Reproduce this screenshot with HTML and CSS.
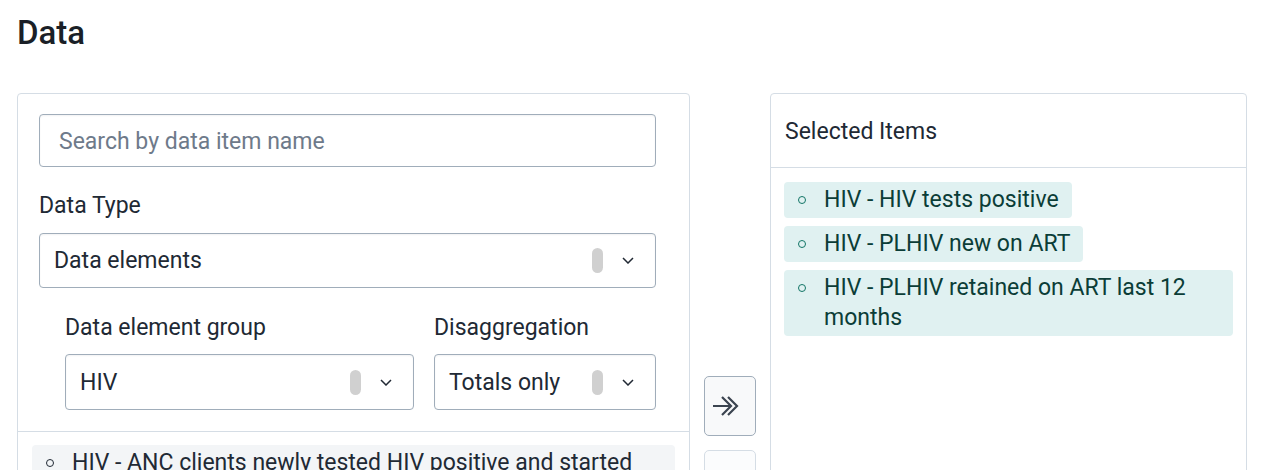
FILE: index.html
```html
<!DOCTYPE html>
<html lang="en">
<head>
<meta charset="utf-8">
<title>Data</title>
<link rel="stylesheet" href="styles.css">
</head>
<body>
<div class="page">
  <h1 class="title">Data</h1>
  <div class="transfer">
    <section class="panel source">
      <div class="filters">
        <div class="search">Search by data item name</div>
        <label class="label label-type">Data Type</label>
        <div class="select">
          <span class="select-value">Data elements</span>
          <span class="pill"></span>
          <svg class="chev" width="12" height="7" viewBox="0 0 12 7"><path d="M1 1l5 5 5-5" fill="none" stroke="#212934" stroke-width="1.5"/></svg>
        </div>
        <div class="subrow">
          <div class="field grow">
            <label class="label">Data element group</label>
            <div class="select">
              <span class="select-value">HIV</span>
              <span class="pill"></span>
              <svg class="chev" width="12" height="7" viewBox="0 0 12 7"><path d="M1 1l5 5 5-5" fill="none" stroke="#212934" stroke-width="1.5"/></svg>
            </div>
          </div>
          <div class="field fixed">
            <label class="label">Disaggregation</label>
            <div class="select">
              <span class="select-value">Totals only</span>
              <span class="pill"></span>
              <svg class="chev" width="12" height="7" viewBox="0 0 12 7"><path d="M1 1l5 5 5-5" fill="none" stroke="#212934" stroke-width="1.5"/></svg>
            </div>
          </div>
        </div>
      </div>
      <div class="options">
        <div class="option"><span class="dot"></span><span>HIV - ANC clients newly tested HIV positive and started ART</span></div>
      </div>
    </section>

    <div class="actions">
      <button class="btn" type="button" aria-label="Select all">
        <svg width="36" height="22" viewBox="0 0 36 22"><path d="M1 11H18.5M10 2l9 9-9 9M16 2l9 9-9 9" fill="none" stroke="#3b4450" stroke-width="2.2"/></svg>
      </button>
      <button class="btn disabled" type="button" aria-label="Deselect all">
        <svg width="36" height="22" viewBox="0 0 36 22"><path d="M35 11H17.5M26 2l-9 9 9 9M20 2l-9 9 9 9" fill="none" stroke="#a0adba" stroke-width="2.2"/></svg>
      </button>
    </div>

    <section class="panel picked">
      <div class="picked-head">Selected Items</div>
      <div class="chips">
        <div class="chip"><span class="dot"></span><span>HIV - HIV tests positive</span></div>
        <div class="chip"><span class="dot"></span><span>HIV - PLHIV new on ART</span></div>
        <div class="chip"><span class="dot"></span><span>HIV - PLHIV retained on ART last 12 months</span></div>
      </div>
    </section>
  </div>
</div>
</body>
</html>
```

FILE: styles.css
```css
* { box-sizing: border-box; }

html, body {
  margin: 0;
  background: #ffffff;
}

body {
  font-family: Roboto, "Liberation Sans", sans-serif;
  color: #212934;
  font-size: 23px;
  line-height: 33px;
}

.page {
  padding: 14px 16px 0 17px;
}

.title {
  margin: 0;
  font-size: 33px;
  font-weight: 500;
  line-height: 38px;
  color: #1a1f27;
}

.transfer {
  margin-top: 41px;
  display: grid;
  grid-template-columns: 673px 80px 1fr;
  align-items: start;
}

.panel {
  border: 1px solid #d5dde5;
  border-radius: 4px;
  min-height: 520px;
  background: #fff;
}

.filters {
  padding: 20px 33px 21px 21px;
  border-bottom: 1px solid #d5dde5;
}

.search {
  height: 53px;
  border: 1px solid #a0adba;
  border-radius: 4px;
  padding: 1px 19px 0;
  display: flex;
  align-items: center;
  color: #6e7a8a;
  box-shadow: inset 0 1px 2px rgba(33, 41, 52, 0.06);
}

.label {
  display: block;
}

.label-type {
  margin: 22px 0 11px;
}

.select {
  height: 55px;
  border: 1px solid #a0adba;
  border-radius: 4px;
  padding: 0 21px 0 14px;
  display: flex;
  align-items: center;
  box-shadow: inset 0 1px 2px rgba(33, 41, 52, 0.06);
}

.select-value {
  flex: 1;
  white-space: nowrap;
}

.pill {
  width: 11px;
  height: 25px;
  border-radius: 6px;
  background: #d0d0d0;
  margin-right: 19px;
}

.chev {
  display: block;
}

.subrow {
  display: flex;
  gap: 20px;
  margin: 23px 0 0 26px;
}

.subrow .label {
  margin-bottom: 10px;
}

.subrow .select {
  height: 56px;
}

.field.grow {
  flex: 1;
}

.field.fixed {
  width: 222px;
}

.options {
  padding: 13px 14px;
}

.option {
  background: #f3f5f7;
  border-radius: 4px;
  padding: 3px 12px 3px 14px;
  display: flex;
  align-items: baseline;
  line-height: 30px;
}

.dot {
  flex: none;
  width: 8px;
  height: 8px;
  border: 1.5px solid currentColor;
  border-radius: 50%;
  margin-right: 18px;
  position: relative;
  top: -3px;
}

.actions {
  display: flex;
  flex-direction: column;
  align-items: center;
  gap: 14px;
  padding-top: 283px;
}

.btn {
  width: 52px;
  height: 60px;
  border: 1px solid #a0adba;
  border-radius: 5px;
  background: #f8f9fa;
  display: flex;
  align-items: center;
  justify-content: center;
  padding: 0;
}

.btn.disabled {
  border-color: #d5dde5;
  background: #fbfcfd;
}

.picked-head {
  padding: 21px 14px 19px;
  border-bottom: 1px solid #d5dde5;
}

.chips {
  padding: 14px 13px;
  display: flex;
  flex-direction: column;
  align-items: flex-start;
  gap: 8px;
}

.chip {
  background: #e0f1f1;
  color: #0b3d37;
  border-radius: 4px;
  padding: 3px 13px 3px 14px;
  display: flex;
  align-items: baseline;
  line-height: 30px;
  max-width: 100%;
}

.chip .dot {
  color: #127566;
}
```
